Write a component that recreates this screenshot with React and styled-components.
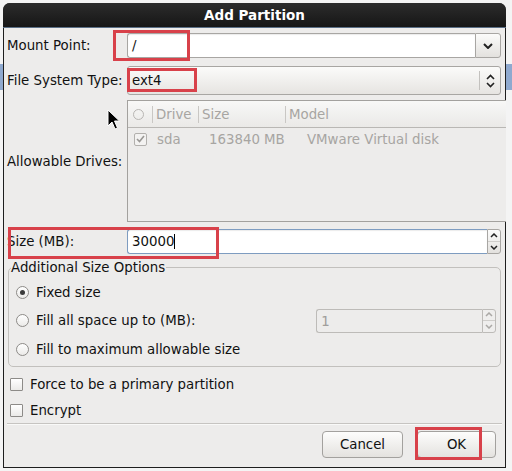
import React from "react";
import styled, { createGlobalStyle } from "styled-components";

const Global = createGlobalStyle`
  html, body { margin: 0; padding: 0; }
  body {
    width: 512px; height: 471px; overflow: hidden;
    background:
      linear-gradient(to bottom, transparent 64px, #8fa9cf 64px, #8fa9cf 90px, transparent 90px),
      #f4f4f4;
    font-family: "DejaVu Sans", "Liberation Sans", sans-serif;
    font-size: 13.33px;
    color: #111;
  }
`;

const Screen = styled.div`
  padding: 3px 0 0 3px;
`;

const Dialog = styled.div`
  position: relative;
  width: 503px;
  height: 465px;
  box-sizing: border-box;
  display: flex;
  flex-direction: column;
  border-radius: 7px 7px 0 0;
  background: #1e1e1e;
  overflow: hidden;
`;

const TitleBar = styled.div`
  height: 24px;
  flex: none;
  display: flex;
  align-items: center;
  justify-content: center;
  background: linear-gradient(to bottom, #2c2c2c, #161616);
  color: #fff;
  font-weight: bold;
  font-size: 13.5px;
  border-bottom: 1px solid #5a6f86;
`;

const Body = styled.div`
  flex: 1;
  background: #edeceb;
  margin: 0 1px 1px 1px;
  padding: 5px 3px 0 3px;
  display: flex;
  flex-direction: column;
`;

const Row = styled.div`
  display: flex;
  align-items: center;
  margin-top: ${(p) => p.$mt || 0}px;
  height: ${(p) => p.$h}px;
`;

const Label = styled.div`
  width: 120px;
  flex: none;
  white-space: nowrap;
`;

const Field = styled.div`
  flex: 1;
  display: flex;
  height: 100%;
  margin-right: 1px;
`;

const EntryBox = styled.div`
  flex: 1;
  display: flex;
  align-items: center;
  padding-left: 4px;
  background: #fff;
  border: 1px solid ${(p) => (p.$focus ? "#7e9cc0" : "#a8a6a3")};
  border-right: none;
  border-radius: 3px 0 0 3px;
  box-shadow: inset 0 1px 1px rgba(0,0,0,0.08);
`;

const Caret = styled.span`
  display: inline-block;
  width: 1px;
  height: 15px;
  background: #000;
`;

const ComboButton = styled.div`
  width: 24px;
  flex: none;
  display: flex;
  align-items: center;
  justify-content: center;
  border: 1px solid #a8a6a3;
  border-radius: 0 3px 3px 0;
  background: linear-gradient(to bottom, #fbfbfa, #e3e1de);
`;

const SelectBox = styled.div`
  flex: 1;
  display: flex;
  align-items: center;
  border: 1px solid #a8a6a3;
  border-radius: 3px;
  background: linear-gradient(to bottom, #fbfbfa, #e6e4e1);
  padding-left: 4px;
`;

const SelectText = styled.div`
  flex: 1;
`;

const SelectSep = styled.div`
  width: 1px;
  align-self: stretch;
  margin: 4px 0;
  background: #c3c1be;
`;

const SelectArrow = styled.div`
  width: 20px;
  display: flex;
  justify-content: center;
  align-items: center;
`;

const SpinButtons = styled.div`
  width: 12px;
  flex: none;
  display: flex;
  flex-direction: column;
  border: 1px solid ${(p) => (p.$disabled ? "#bdbbb8" : "#a8a6a3")};
  border-radius: 0 3px 3px 0;
  background: ${(p) => (p.$disabled ? "#efeeed" : "linear-gradient(to bottom, #fbfbfa, #e3e1de)")};
`;

const SpinHalf = styled.div`
  flex: 1;
  display: flex;
  align-items: center;
  justify-content: center;
  & + & { border-top: 1px solid ${(p) => (p.$disabled ? "#cfcdca" : "#b8b6b3")}; }
`;

const Tree = styled.div`
  flex: 1;
  height: 100%;
  box-sizing: border-box;
  border: 1px solid #a3a19e;
  background: #edeceb;
  display: flex;
  flex-direction: column;
  margin-right: 1px;
  color: #a7a5a2;
`;

const TreeHeader = styled.div`
  height: 26px;
  flex: none;
  display: flex;
  align-items: center;
  border-bottom: 1px solid #b9b7b4;
  background: linear-gradient(to bottom, #f8f8f7, #eae9e7);
`;

const HeaderCell = styled.div`
  width: ${(p) => p.$w}px;
  flex: none;
  display: flex;
  align-items: center;
  padding-left: ${(p) => p.$pl || 3}px;
  box-sizing: border-box;
  height: 17px;
  border-right: ${(p) => (p.$last ? "none" : "1px solid #c9c7c4")};
`;

const TreeRow = styled.div`
  height: 22px;
  display: flex;
  align-items: center;
`;

const Cell = styled.div`
  width: ${(p) => p.$w}px;
  flex: none;
  padding-left: ${(p) => p.$pl || 0}px;
  box-sizing: border-box;
  display: flex;
  align-items: center;
`;

const SmallCheck = styled.div`
  width: 11px;
  height: 11px;
  border: 1px solid #b2b0ad;
  border-radius: 2px;
  background: #f3f2f1;
  display: flex;
  align-items: center;
  justify-content: center;
`;

const HeaderCircle = styled.div`
  width: 9px;
  height: 9px;
  border: 1px solid #b8b6b3;
  border-radius: 50%;
`;

const Frame = styled.fieldset`
  margin: 6px 1px 0 1px;
  padding: 6px 0 4px 7px;
  border: 1px solid #c2c0bd;
  border-radius: 5px;
  height: 107px;
  box-sizing: border-box;
  display: flex;
  flex-direction: column;
`;

const Legend = styled.legend`
  padding: 0 1px 0 0;
  margin-left: -5px;
`;

const OptionRow = styled.div`
  height: ${(p) => p.$h || 29}px;
  flex: none;
  display: flex;
  align-items: center;
  gap: 7px;
`;

const Radio = styled.div`
  width: 11px;
  height: 11px;
  border: 1px solid #8d8b88;
  border-radius: 50%;
  background: linear-gradient(to bottom, #ffffff, #ebeae8);
  display: flex;
  align-items: center;
  justify-content: center;
  flex: none;
  &::after {
    content: "";
    width: 5px;
    height: 5px;
    border-radius: 50%;
    background: ${(p) => (p.$checked ? "#3a3a3a" : "transparent")};
  }
`;

const Check = styled.div`
  width: 11px;
  height: 11px;
  border: 1px solid #8d8b88;
  border-radius: 1px;
  background: linear-gradient(to bottom, #ffffff, #ebeae8);
  flex: none;
`;

const Spacer = styled.div`
  flex: 1;
`;

const DisabledSpin = styled.div`
  width: 180px;
  height: 24px;
  display: flex;
  margin-right: 4px;
`;

const DisabledEntry = styled.div`
  flex: 1;
  display: flex;
  align-items: center;
  padding-left: 4px;
  border: 1px solid #bdbbb8;
  border-right: none;
  border-radius: 3px 0 0 3px;
  color: #a09e9b;
  font-family: "DejaVu Sans Mono", "Liberation Mono", monospace;
  font-size: 14px;
`;

const Checks = styled.div`
  margin-top: 3px;
  display: flex;
  flex-direction: column;
  padding-left: 3px;
`;

const Separator = styled.div`
  height: 1px;
  margin-top: 0;
  background: #c6c4c1;
  border-bottom: 1px solid #f9f9f8;
`;

const ButtonBar = styled.div`
  display: flex;
  justify-content: flex-end;
  gap: 14px;
  margin-top: 6px;
  padding-right: 6px;
`;

const Button = styled.div`
  width: ${(p) => p.$w}px;
  height: 27px;
  box-sizing: border-box;
  border: 1px solid #a3a19e;
  border-radius: 4px;
  background: linear-gradient(to bottom, #fdfdfc, #e4e2df);
  display: flex;
  align-items: center;
  justify-content: center;
`;

const Annotation = styled.div`
  position: absolute;
  box-sizing: border-box;
  border: 3px solid #d8414a;
  pointer-events: none;
`;

const Cursor = styled.svg`
  position: absolute;
  left: 104px;
  top: 106px;
`;

const ChevronDown = ({ size = 10, color = "#222", w = 2 }) => (
  <svg width={size} height={size * 0.6} viewBox="0 0 10 6">
    <path d="M1 1 L5 5 L9 1" fill="none" stroke={color} strokeWidth={w} />
  </svg>
);

const UpDown = ({ color = "#222" }) => (
  <svg width="9" height="14" viewBox="0 0 9 14">
    <path d="M1 5 L4.5 1.5 L8 5" fill="none" stroke={color} strokeWidth="1.6" />
    <path d="M1 9 L4.5 12.5 L8 9" fill="none" stroke={color} strokeWidth="1.6" />
  </svg>
);

const SmallArrow = ({ up, color = "#222" }) => (
  <svg width="8" height="5" viewBox="0 0 8 5">
    <path d={up ? "M1 4 L4 1 L7 4" : "M1 1 L4 4 L7 1"} fill="none" stroke={color} strokeWidth="1.5" />
  </svg>
);

export default function App() {
  return (
    <>
      <Global />
      <Screen>
        <Dialog>
          <TitleBar>Add Partition</TitleBar>
          <Body>
            <Row $h={25}>
              <Label>Mount Point:</Label>
              <Field>
                <EntryBox>/</EntryBox>
                <ComboButton>
                  <ChevronDown />
                </ComboButton>
              </Field>
            </Row>
            <Row $h={29} $mt={8}>
              <Label>File System Type:</Label>
              <Field>
                <SelectBox>
                  <SelectText>ext4</SelectText>
                  <SelectSep />
                  <SelectArrow>
                    <UpDown />
                  </SelectArrow>
                </SelectBox>
              </Field>
            </Row>
            <Row $h={122} $mt={5}>
              <Label>Allowable Drives:</Label>
              <Tree>
                <TreeHeader>
                  <HeaderCell $w={25} $pl={5}>
                    <HeaderCircle />
                  </HeaderCell>
                  <HeaderCell $w={46}>Drive</HeaderCell>
                  <HeaderCell $w={87}>Size</HeaderCell>
                  <HeaderCell $w={200} $last>Model</HeaderCell>
                </TreeHeader>
                <TreeRow>
                  <Cell $w={29} $pl={6}>
                    <SmallCheck>
                      <svg width="9" height="8" viewBox="0 0 9 8">
                        <path d="M1 4 L3.5 6.5 L8 1" fill="none" stroke="#9a9895" strokeWidth="1.6" />
                      </svg>
                    </SmallCheck>
                  </Cell>
                  <Cell $w={52}>sda</Cell>
                  <Cell $w={98}>163840 MB</Cell>
                  <Cell $w={200}>VMware Virtual disk</Cell>
                </TreeRow>
              </Tree>
            </Row>
            <Row $h={25} $mt={7}>
              <Label>Size (MB):</Label>
              <Field>
                <EntryBox $focus>30000<Caret /></EntryBox>
                <SpinButtons>
                  <SpinHalf><SmallArrow up /></SpinHalf>
                  <SpinHalf><SmallArrow /></SpinHalf>
                </SpinButtons>
              </Field>
            </Row>
            <Frame>
              <Legend>Additional Size Options</Legend>
              <OptionRow $h={23}>
                <Radio $checked />
                Fixed size
              </OptionRow>
              <OptionRow $h={33}>
                <Radio />
                Fill all space up to (MB):
                <Spacer />
                <DisabledSpin>
                  <DisabledEntry>1</DisabledEntry>
                  <SpinButtons $disabled>
                    <SpinHalf $disabled><SmallArrow up color="#aaa8a5" /></SpinHalf>
                    <SpinHalf $disabled><SmallArrow color="#aaa8a5" /></SpinHalf>
                  </SpinButtons>
                </DisabledSpin>
              </OptionRow>
              <OptionRow $h={25}>
                <Radio />
                Fill to maximum allowable size
              </OptionRow>
            </Frame>
            <Checks>
              <OptionRow $h={28}>
                <Check />
                Force to be a primary partition
              </OptionRow>
              <OptionRow $h={25}>
                <Check />
                Encrypt
              </OptionRow>
            </Checks>
            <Separator />
            <ButtonBar>
              <Button $w={81}>Cancel</Button>
              <Button $w={79}>OK</Button>
            </ButtonBar>
          </Body>
          <Annotation style={{ left: 110, top: 27, width: 77, height: 31 }} />
          <Annotation style={{ left: 124, top: 65, width: 70, height: 24 }} />
          <Annotation style={{ left: 5, top: 224, width: 211, height: 32 }} />
          <Annotation style={{ left: 412, top: 424, width: 67, height: 33 }} />
          <Cursor width="14" height="22" viewBox="0 0 14 22">
            <path d="M1 1 L1 17 L5 13 L8 20 L10.5 19 L7.5 12 L12.5 12 Z" fill="#000" stroke="#fff" strokeWidth="1" />
          </Cursor>
        </Dialog>
      </Screen>
    </>
  );
}
